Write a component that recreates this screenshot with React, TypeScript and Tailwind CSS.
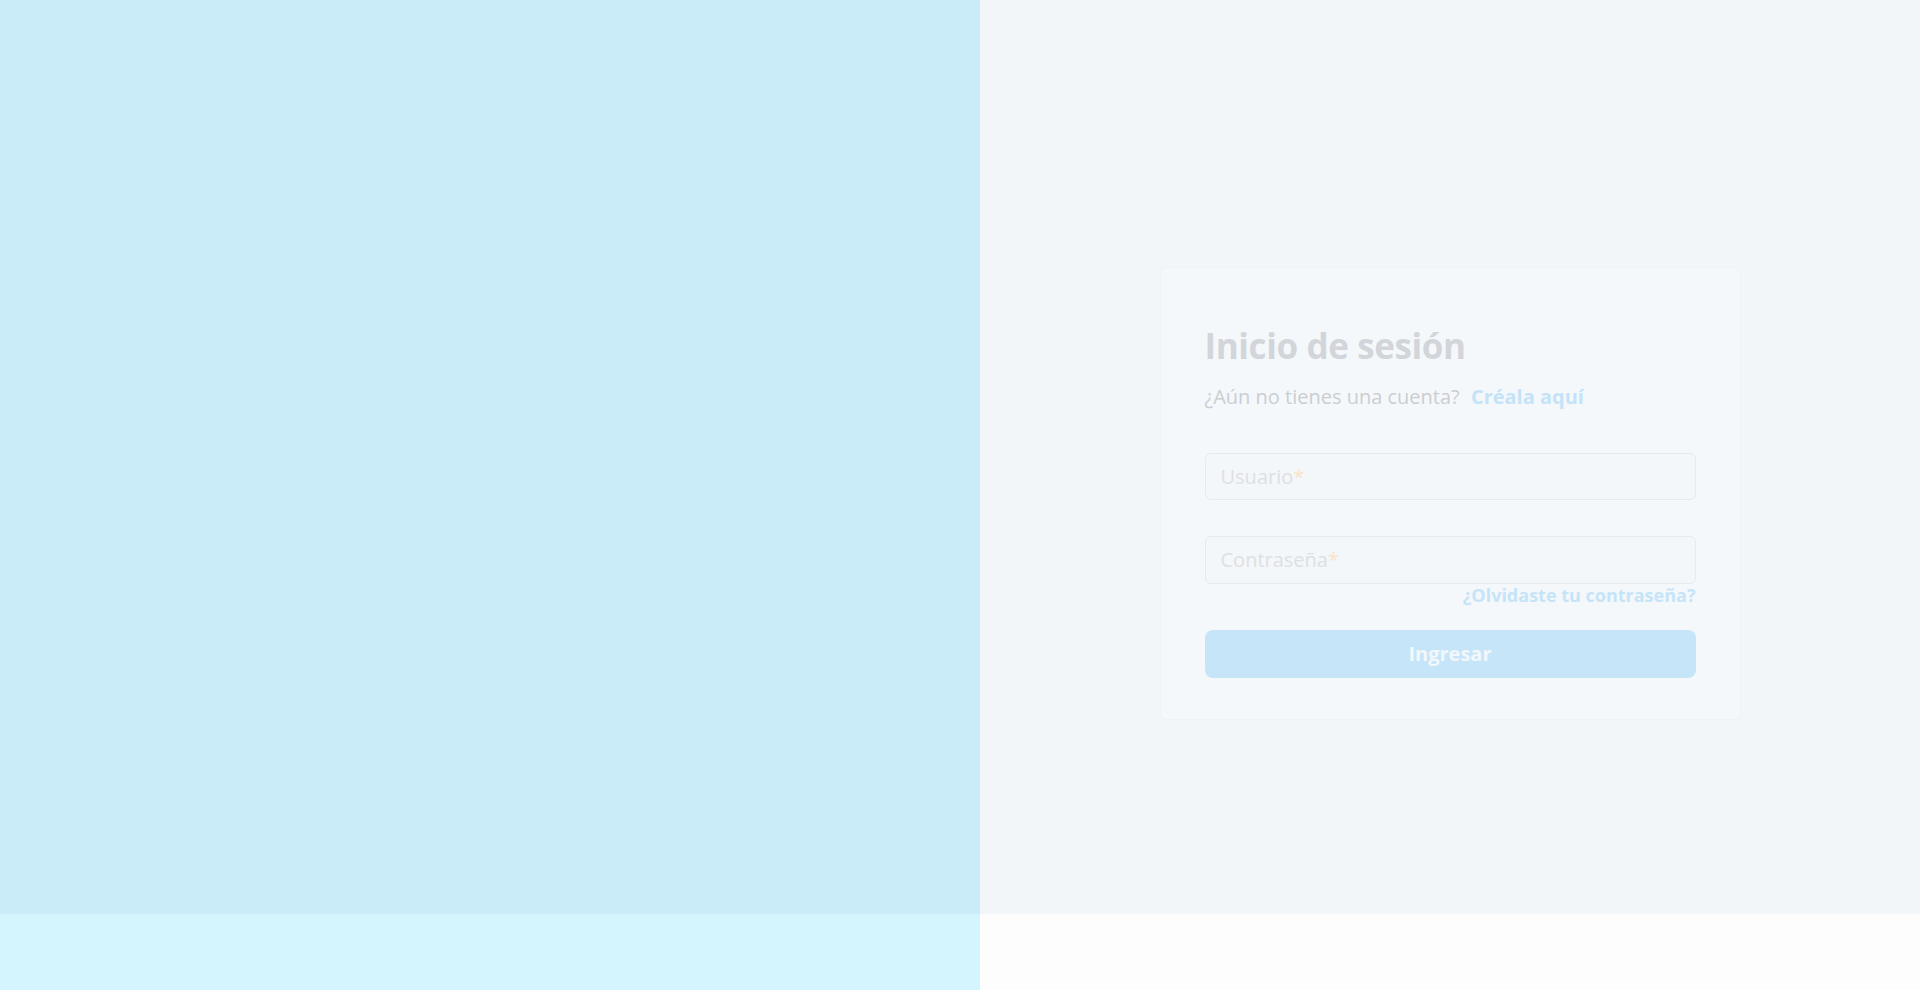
export default function App() {
  return (
    <div className="flex h-[990px] w-full font-['Open_Sans',sans-serif]">
      {/* left image column */}
      <div className="flex w-[980px] flex-col">
        <div className="h-[914px] bg-[#c9ecf8]" />
        <div className="flex-1 bg-[#d4f5fe]" />
      </div>

      {/* right form column */}
      <div className="flex flex-1 flex-col">
        <div className="flex h-[914px] justify-center bg-[#f2f6f9] pt-[267px]">
          <div className="h-[453px] w-[581px] rounded-md border border-[#eff3f6] bg-[#f4f8fb] px-[44px] pt-[56px]">
            <h1 className="text-[35px] font-bold leading-[1.23] tracking-[-0.4px] text-[#d2d5da]">Inicio de sesión</h1>
            <p className="mt-[18px] text-[20px] leading-[1.2] text-[#cbced1]">
              ¿Aún no tienes una cuenta?{" "}
              <a href="#" className="ml-1.5 font-bold text-[#c4e3f8]">
                Créala aquí
              </a>
            </p>

            <div className="mt-[44px] flex h-[47px] items-center rounded-md border border-[#e6eaee] bg-[#f4f7fa] px-[15px]">
              <span className="text-[20px] text-[#dde0e3]">
                Usuario<span className="text-[#f9e3c8]">*</span>
              </span>
            </div>

            <div className="mt-[36px] flex h-[48px] items-center rounded-md border border-[#e6eaee] bg-[#f4f7fa] px-[15px]">
              <span className="text-[20px] text-[#dde0e3]">
                Contraseña<span className="text-[#f9e3c8]">*</span>
              </span>
            </div>

            <div className="mt-px text-right text-[18px] font-bold leading-[1.2] text-[#c6e4f8]">
              <a href="#">¿Olvidaste tu contraseña?</a>
            </div>

            <button className="mt-[23px] flex h-[48px] w-full items-center justify-center rounded-lg bg-[#c6e5f9] text-[20px] font-bold text-[#f2f7fb]">
              Ingresar
            </button>
          </div>
        </div>
        <div className="flex-1 bg-[#fdfdfd]" />
      </div>
    </div>
  );
}
